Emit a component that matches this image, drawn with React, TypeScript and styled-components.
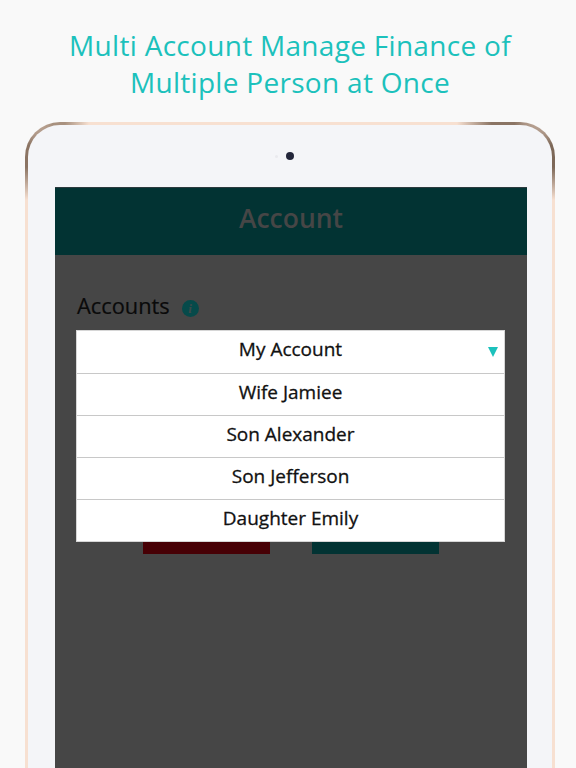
import { FC } from "react";
import styled, { createGlobalStyle } from "styled-components";

const accounts = ["My Account", "Wife Jamiee", "Son Alexander", "Son Jefferson", "Daughter Emily"];

const GlobalStyle = createGlobalStyle`
	html,
	body {
		margin: 0;
		padding: 0;
		background: #f9f9f9;
	}
`;

const App: FC = () => {
	return (
		<Page>
			<GlobalStyle />
			<Title>
				Multi Account Manage Finance of
				<br />
				Multiple Person at Once
			</Title>
			<DeviceFrame>
				<Device>
					<CameraRow>
						<Sensor />
						<Camera />
					</CameraRow>
					<Screen>
						<Header>Account</Header>
						<Body>
							<LabelRow>
								<Label>Accounts</Label>
								<InfoIcon>i</InfoIcon>
							</LabelRow>
							<SelectArea>
								<Dropdown>
									{accounts.map((name, idx) => (
										<Option key={name}>
											{name}
											{idx === 0 && <Arrow />}
										</Option>
									))}
								</Dropdown>
								<Buttons>
									<ActionButton $color="#470005" />
									<ActionButton $color="#023333" />
								</Buttons>
							</SelectArea>
						</Body>
					</Screen>
				</Device>
			</DeviceFrame>
		</Page>
	);
};

export default App;

const Page = styled.div`
	width: 576px;
	height: 768px;
	overflow: hidden;
	background: #f9f9f9;
	font-family: "Open Sans", "Noto Sans", sans-serif;
`;

const Title = styled.h1`
	margin: 0;
	height: 122px;
	padding: 27px 0 0 4px;
	box-sizing: border-box;
	text-align: center;
	font-size: 28px;
	line-height: 37px;
	font-weight: 400;
	letter-spacing: 0.3px;
	color: #1cc1bc;
`;

const DeviceFrame = styled.div`
	margin-left: 25px;
	width: 530px;
	height: 680px;
	padding: 3px 3px 0;
	box-sizing: border-box;
	border-radius: 35px 35px 0 0;
	background:
		radial-gradient(circle 44px at 2px 34px, #8b7463 25%, rgba(139, 116, 99, 0) 100%),
		radial-gradient(circle 44px at 528px 34px, #7d6858 25%, rgba(125, 104, 88, 0) 100%),
		radial-gradient(circle 30px at 34px 0, #a8917f 20%, rgba(168, 145, 127, 0) 100%),
		radial-gradient(circle 46px at 478px 0, #8a7464 25%, rgba(138, 116, 100, 0) 100%),
		#f7e0d1;
`;

const Device = styled.div`
	height: 100%;
	padding: 0 27px;
	border-radius: 32px 32px 0 0;
	background: #f4f5f8;
`;

const CameraRow = styled.div`
	height: 62px;
	display: flex;
	align-items: flex-end;
	justify-content: center;
	gap: 8px;
	padding-right: 12px;
	box-sizing: border-box;
	padding-bottom: 27px;
`;

const Sensor = styled.span`
	width: 3px;
	height: 3px;
	margin-bottom: 2px;
	border-radius: 50%;
	background: #e9eaee;
`;

const Camera = styled.span`
	width: 8px;
	height: 8px;
	border-radius: 50%;
	background: #23263a;
`;

const Screen = styled.div`
	width: 472px;
	height: 600px;
`;

const Header = styled.div`
	height: 68px;
	padding-bottom: 8px;
	display: flex;
	align-items: center;
	justify-content: center;
	border-top: 1px solid #2c3a3e;
	box-sizing: border-box;
	background: #023333;
	color: #464646;
	font-size: 26.5px;
	font-weight: 600;
`;

const Body = styled.div`
	height: 100%;
	padding: 36px 22px 0 21px;
	box-sizing: border-box;
	background: #464646;
`;

const LabelRow = styled.div`
	height: 39px;
	padding-left: 1px;
	display: flex;
	align-items: flex-start;
	gap: 12px;
`;

const Label = styled.span`
	font-size: 21.8px;
	line-height: 29px;
	color: #0a0a0a;
	-webkit-text-stroke: 0.2px #0a0a0a;
`;

const InfoIcon = styled.span`
	width: 17px;
	height: 17px;
	margin-top: 9px;
	display: flex;
	align-items: center;
	justify-content: center;
	border-radius: 50%;
	background: #064a4a;
	color: #3c4a4a;
	font-family: "Liberation Serif", serif;
	font-size: 13px;
	font-style: italic;
	font-weight: 700;
`;

const SelectArea = styled.div`
	position: relative;
`;

const Dropdown = styled.ul`
	position: absolute;
	top: 0;
	left: 0;
	width: 429px;
	margin: 0;
	padding: 0;
	list-style: none;
	background: #fff;
	box-sizing: border-box;
	border: 1px solid #d6d6d6;
`;

const Option = styled.li`
	position: relative;
	height: 42px;
	padding-bottom: 6px;
	display: flex;
	align-items: center;
	justify-content: center;
	box-sizing: border-box;
	border-bottom: 1px solid #c8c8c8;
	color: #111;
	font-size: 19px;
	-webkit-text-stroke: 0.3px #111;

	&:first-child {
		height: 43px;
	}

	&:last-child {
		height: 41px;
		border-bottom: none;
	}
`;

const Arrow = styled.span`
	position: absolute;
	right: 6px;
	top: 16px;
	width: 0;
	height: 0;
	border-left: 5.5px solid transparent;
	border-right: 5.5px solid transparent;
	border-top: 10px solid #1cc1bc;
`;

const Buttons = styled.div`
	padding: 176px 0 0 67px;
	display: flex;
	gap: 42px;
`;

const ActionButton = styled.div<{ $color: string }>`
	width: 127px;
	height: 48px;
	background: ${({ $color }) => $color};
`;
